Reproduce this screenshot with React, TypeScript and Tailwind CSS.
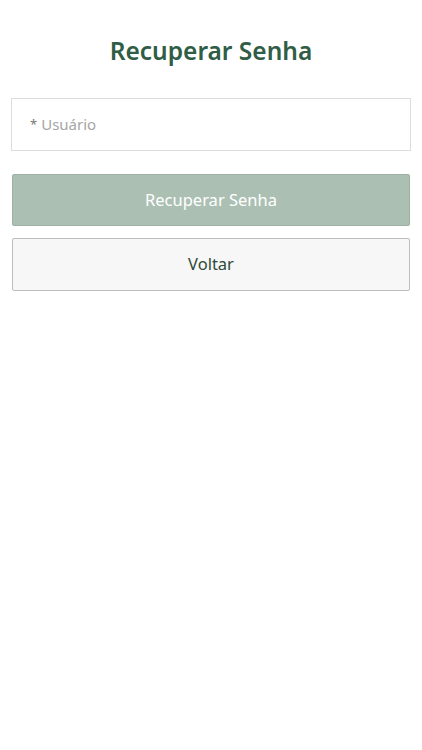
import React from 'react';

const App: React.FC = () => {
  return (
    <div
      className="min-h-[750px] w-full bg-white px-[11px] pt-[33px]"
      style={{ fontFamily: '"Noto Sans", "Open Sans", sans-serif' }}
    >
      <h1 className="text-center text-[24.5px] font-semibold leading-[36px] text-[#2f5d45]">
        Recuperar Senha
      </h1>

      <div className="mt-[29px] flex h-[53px] items-center border border-[#dddddd] px-[18px] text-[15px] text-[#a6a6a6]">
        <span className="text-[13px] text-[#777777]">*</span>
        <span className="ml-[4px]">Usuário</span>
      </div>

      <div className="mt-[23px] flex flex-col gap-[12px] px-px">
        <button className="flex h-[52px] items-center justify-center rounded-[2px] border border-[#9cb0a4] bg-[#abbfb3] text-[16.5px] text-white">
          Recuperar Senha
        </button>
        <button className="flex h-[53px] items-center justify-center rounded-[2px] border border-[#bdbdbd] bg-[#f7f7f7] text-[16.5px] text-[#2e4a3b]">
          Voltar
        </button>
      </div>
    </div>
  );
};

export default App;
